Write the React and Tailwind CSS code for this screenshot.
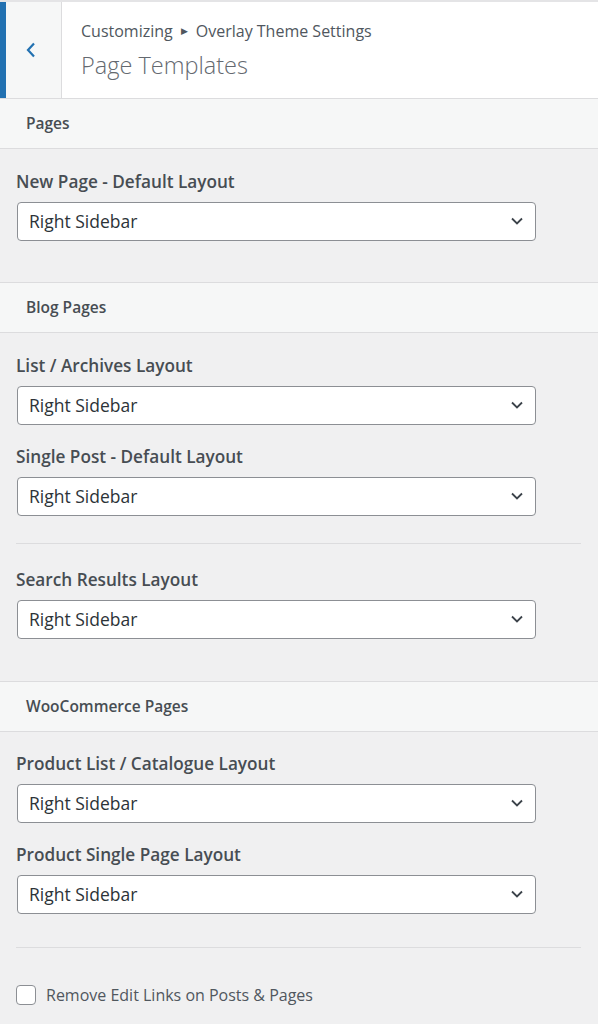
import React from "react";

const font = { fontFamily: '"Open Sans", "Noto Sans", sans-serif' };

function Select({ className = "" }) {
  return (
    <div
      className={`relative w-[519px] h-[39px] ml-[1px] bg-white border border-[#8c8f94] rounded-[4px] flex items-center pl-[11px] ${className}`}
    >
      <span className="text-[17.5px] text-[#2c3338]">Right Sidebar</span>
      <svg
        className="absolute right-[11px] top-[13px]"
        width="14"
        height="10"
        viewBox="0 0 14 10"
        fill="none"
      >
        <path d="M2 2.5l5 5 5-5" stroke="#3c434a" strokeWidth="1.8" />
      </svg>
    </div>
  );
}

function Label({ children }) {
  return (
    <div className="text-[17.2px] leading-[22px] font-semibold text-[#474d53] ml-[16px]">
      {children}
    </div>
  );
}

function SectionHeader({ children }) {
  return (
    <div className="h-[51px] bg-[#f6f7f7] border-t border-b border-[#dcdcde] flex items-center pl-[26px]">
      <span className="text-[15.5px] font-semibold text-[#474d53]">{children}</span>
    </div>
  );
}

function Divider({ className = "" }) {
  return <div className={`h-px bg-[#dcdcde] ml-[16px] mr-[17px] ${className}`} />;
}

function Control({ label, className = "" }) {
  return (
    <div className={className}>
      <Label>{label}</Label>
      <div className="pl-[16px] mt-[9px]">
        <Select />
      </div>
    </div>
  );
}

export default function App() {
  return (
    <div style={font} className="w-[598px] h-[1024px] bg-[#f0f0f1] overflow-hidden">
      {/* Header */}
      <div className="h-[98px] bg-white border-t-2 border-[#e4e4e6] flex">
        <div className="w-[62px] bg-[#f6f7f7] border-r border-[#dcdcde] flex items-center relative">
          <div className="absolute left-0 top-0 bottom-0 w-[6px] bg-[#2271b1]" />
          <svg className="ml-[25px]" width="12" height="18" viewBox="0 0 12 18" fill="none">
            <path d="M9 2.5L3 9l6 6.5" stroke="#2271b1" strokeWidth="2.2" />
          </svg>
        </div>
        <div className="pl-[19px] pt-[17px]">
          <div className="text-[16px] leading-[24px] text-[#50575e] flex items-center">
            Customizing
            <span className="text-[9px] mx-[8px] text-[#50575e]">▶</span>
            Overlay Theme Settings
          </div>
          <div className="text-[23.5px] leading-[30px] mt-[7px] font-light text-[#646970]">
            Page Templates
          </div>
        </div>
      </div>

      <SectionHeader>Pages</SectionHeader>
      <Control label="New Page - Default Layout" className="pt-[22px]" />
      <div className="h-[41px]" />

      <SectionHeader>Blog Pages</SectionHeader>
      <Control label="List / Archives Layout" className="pt-[22px]" />
      <Control label="Single Post - Default Layout" className="pt-[21px]" />
      <Divider className="mt-[27px]" />
      <Control label="Search Results Layout" className="pt-[25px]" />
      <div className="h-[42px]" />

      <SectionHeader>WooCommerce Pages</SectionHeader>
      <Control label="Product List / Catalogue Layout" className="pt-[21px]" />
      <Control label="Product Single Page Layout" className="pt-[21px]" />
      <Divider className="mt-[33px]" />

      <div className="flex items-center ml-[16px] mt-[35px]">
        <div className="w-[20px] h-[20px] bg-white border border-[#8c8f94] rounded-[4px]" />
        <span className="ml-[10px] text-[16px] text-[#50575e]">
          Remove Edit Links on Posts &amp; Pages
        </span>
      </div>
    </div>
  );
}
